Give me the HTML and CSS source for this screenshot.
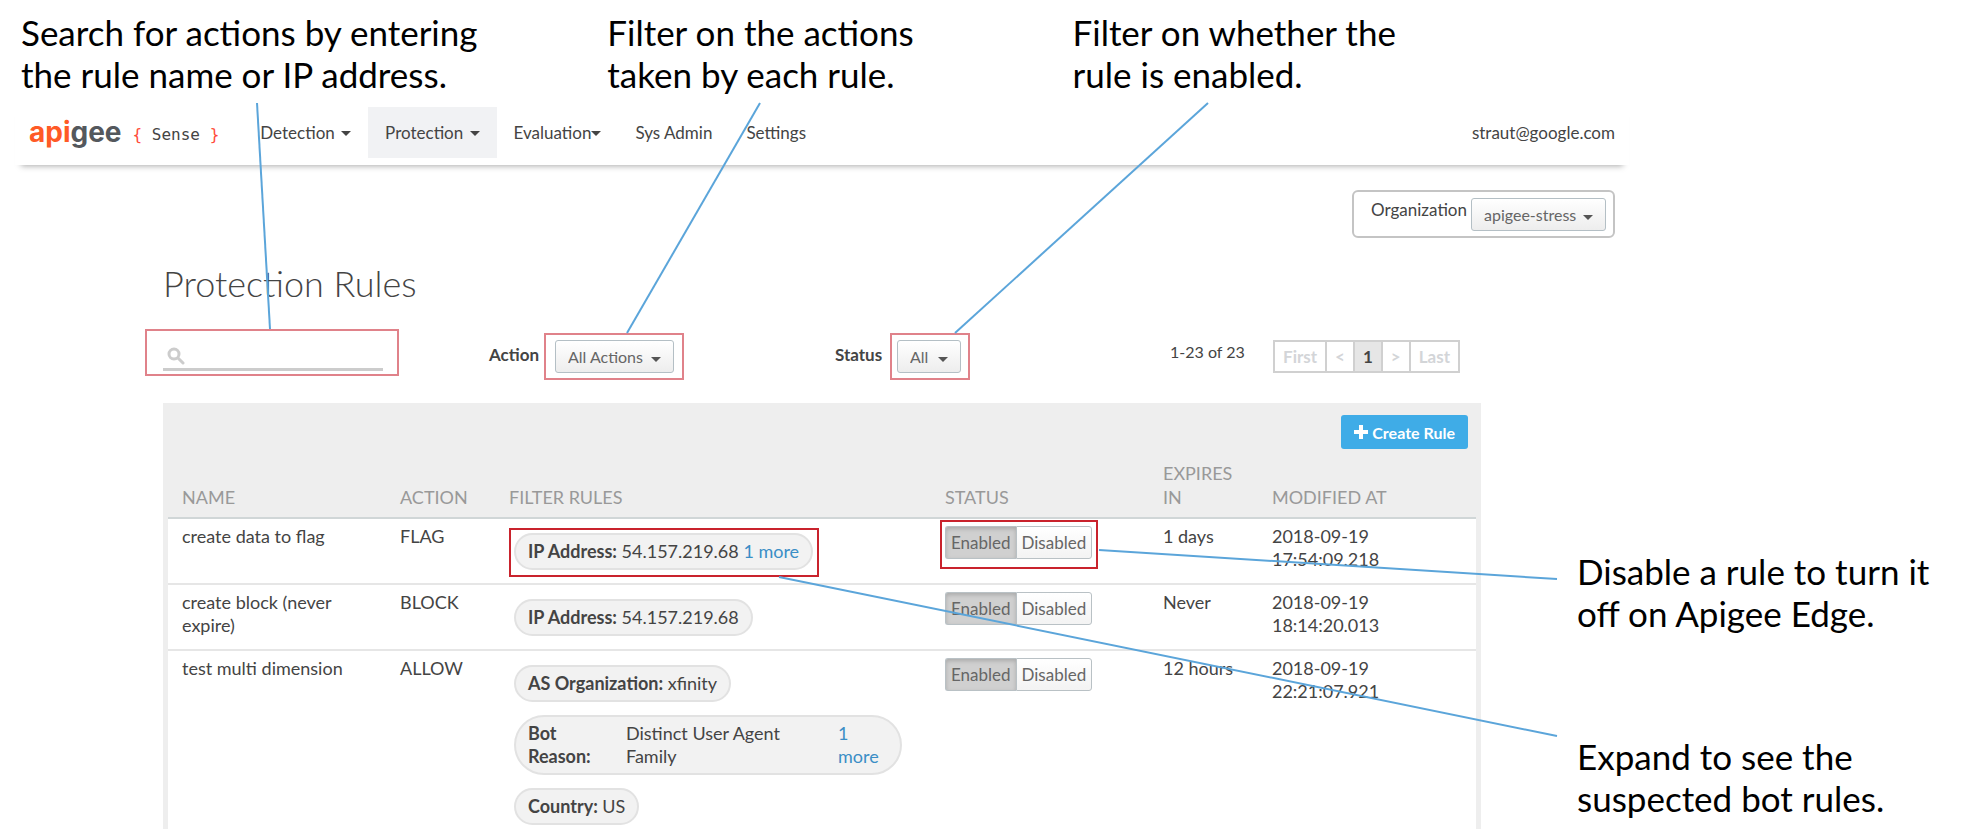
FILE: index.html
```html
<!DOCTYPE html>
<html lang="en">
<head>
  <meta charset="UTF-8" />
  <meta name="viewport" content="width=device-width, initial-scale=1.0"/>
  <title>Protection Rules</title>
  <link rel="stylesheet" href="styles.css">
</head>
<body>
  <div class="page">
    <div class="top-notes">
      <p class="note">Search for actions by entering<br>the rule name or IP address.</p>
      <p class="note">Filter on the actions<br>taken by each rule.</p>
      <p class="note">Filter on whether the<br>rule is enabled.</p>
    </div>

    <header class="header">
      <a class="logo" href="#"><span class="logo-api">api</span>gee</a>
      <span class="product"><b>{</b> Sense <b>}</b></span>
      <nav class="nav">
        <a href="#">Detection <i class="caret"></i></a>
        <a href="#" class="active">Protection <i class="caret"></i></a>
        <a href="#" class="tight">Evaluation<i class="caret"></i></a>
        <a href="#">Sys Admin</a>
        <a href="#">Settings</a>
      </nav>
      <a class="user" href="#">straut@google.com</a>
    </header>

    <div class="org-row">
      <div class="org">
        <label for="org">Organization</label>
        <select id="org" class="select org-select">
          <option>apigee-stress</option>
        </select>
      </div>
    </div>

    <div class="content">
      <main class="main">
        <h1>Protection Rules</h1>

        <div class="toolbar">
          <div class="search mark-light">
            <div class="search-field">
              <svg width="18" height="18" viewBox="0 0 18 18" aria-hidden="true">
                <circle cx="7" cy="7" r="5" fill="none" stroke="#ccc" stroke-width="3"/>
                <path d="M11 11l5 5" stroke="#ccc" stroke-width="3" stroke-linecap="round"/>
              </svg>
              <input type="text" aria-label="Search rules">
            </div>
          </div>
          <div class="filter">
            <label for="action">Action</label>
            <div class="mark-light mark-action">
              <select id="action" class="select action-select">
                <option>All Actions</option>
              </select>
            </div>
          </div>
          <div class="filter">
            <label for="status">Status</label>
            <div class="mark-light mark-status">
              <select id="status" class="select status-select">
                <option>All</option>
              </select>
            </div>
          </div>
          <div class="paging">
            <span class="count">1-23 of 23</span>
            <div class="pager">
              <button>First</button>
              <button>&lt;</button>
              <button class="current">1</button>
              <button>&gt;</button>
              <button>Last</button>
            </div>
          </div>
        </div>

        <section class="panel">
          <div class="panel-bar">
            <button class="create">
              <svg width="14" height="14" viewBox="0 0 14 14" aria-hidden="true">
                <path d="M7 0v14M0 7h14" stroke="#fff" stroke-width="4"/>
              </svg>
              Create Rule
            </button>
          </div>
          <table class="rules">
            <colgroup>
              <col class="col-2"><col class="col-1"><col class="col-4">
              <col class="col-2"><col class="col-1"><col class="col-2">
            </colgroup>
            <thead>
              <tr>
                <th>NAME</th>
                <th>ACTION</th>
                <th>FILTER RULES</th>
                <th>STATUS</th>
                <th>EXPIRES<br>IN</th>
                <th>MODIFIED AT</th>
              </tr>
            </thead>
            <tbody>
              <tr>
                <td>create data to flag</td>
                <td>FLAG</td>
                <td class="pills">
                  <div class="mark-pill">
                    <div class="pill"><b>IP Address:</b> 54.157.219.68 <a href="#">1 more</a></div>
                  </div>
                </td>
                <td>
                  <div class="mark-toggle">
                    <div class="toggle"><button class="on">Enabled</button><button>Disabled</button></div>
                  </div>
                </td>
                <td>1 days</td>
                <td>2018-09-19<br>17:54:09.218</td>
              </tr>
              <tr>
                <td>create block (never expire)</td>
                <td>BLOCK</td>
                <td class="pills">
                  <div class="pill"><b>IP Address:</b> 54.157.219.68</div>
                </td>
                <td>
                  <div class="toggle"><button class="on">Enabled</button><button>Disabled</button></div>
                </td>
                <td>Never</td>
                <td>2018-09-19<br>18:14:20.013</td>
              </tr>
              <tr>
                <td>test multi dimension</td>
                <td>ALLOW</td>
                <td class="pills">
                  <div class="pill"><b>AS Organization:</b> xfinity</div>
                  <div class="pill pill-wide">
                    <b>Bot<br>Reason:</b>
                    <span>Distinct User Agent Family</span>
                    <a href="#">1<br>more</a>
                  </div>
                  <div class="pill"><b>Country:</b> US</div>
                </td>
                <td>
                  <div class="toggle"><button class="on">Enabled</button><button>Disabled</button></div>
                </td>
                <td class="nowrap">12 hours</td>
                <td>2018-09-19<br>22:21:07.921</td>
              </tr>
            </tbody>
          </table>
        </section>
      </main>

      <aside class="side-notes">
        <p class="note">Disable a rule to turn it<br>off on Apigee Edge.</p>
        <p class="note">Expand to see the<br>suspected bot rules.</p>
      </aside>
    </div>

    <!-- leader lines from the notes to the controls -->
    <svg class="leaders" viewBox="0 0 1979 829" preserveAspectRatio="none" aria-hidden="true">
      <path d="M257 103L270 329"/>
      <path d="M760 103L627 333"/>
      <path d="M1208 103L955 333"/>
      <path d="M1099 550L1557 579"/>
      <path d="M779 577L1557 736"/>
    </svg>
  </div>
</body>
</html>
```

FILE: styles.css
```css
* {
  box-sizing: border-box;
}
body {
  margin: 0;
  font-family: Lato, sans-serif;
  font-size: 17px;
  color: #444;
  background: #fff;
}
a {
  color: inherit;
  text-decoration: none;
}
button, select, input {
  font-family: inherit;
  font-size: 16px;
  margin: 0;
}
.page {
  position: relative;
  height: 100vh;
  overflow: hidden;
}

/* notes */
.note {
  margin: 0;
  font-size: 35px;
  line-height: 42px;
  color: #000;
  white-space: nowrap;
}
.top-notes {
  display: grid;
  grid-template-columns: 586fr 465fr 906fr;
  padding: 11px 0 10px 21px;
}
.side-notes {
  flex: 0 0 402px;
  padding-top: 312px;
}
.side-notes .note + .note {
  margin-top: 101px;
}
.leaders {
  position: absolute;
  top: 0;
  left: 0;
  width: 100%;
  height: 829px;
  pointer-events: none;
}
.leaders path {
  fill: none;
  stroke: #5ba5da;
  stroke-width: 2;
  vector-effect: non-scaling-stroke;
}

/* header */
.header {
  display: flex;
  align-items: center;
  height: 60px;
  margin: 0 350px 0 15px;
  padding: 0 14px 6px;
  box-shadow: 0 7px 6px -6px #aaa;
}
.logo {
  font-family: Inter, sans-serif;
  font-size: 28px;
  font-weight: 700;
  color: #54585d;
}
.logo-api {
  color: #ff5a26;
}
.product {
  margin-left: 11px;
  padding-top: 4px;
  font-family: "DejaVu Sans Mono", monospace;
  font-size: 16px;
}
.product b {
  font-weight: 400;
  color: #ff4b3a;
}
.nav {
  display: flex;
  margin-left: 24px;
}
.nav a {
  padding: 0 17px;
  line-height: 51px;
}
.nav .active {
  background: #f1f2f4;
}
.caret {
  display: inline-block;
  margin-left: 2px;
  vertical-align: 3px;
  border: 5px solid transparent;
  border-top-color: #444;
  border-bottom: 0;
}
.tight .caret {
  margin-left: 0;
}
.user {
  margin-left: auto;
}

/* organization picker */
.org-row {
  display: flex;
  justify-content: flex-end;
  margin: 25px 364px 0 0;
}
.org {
  display: flex;
  align-items: center;
  gap: 4px;
  height: 48px;
  padding: 0 7px 0 17px;
  border: 2px solid #c4c4c4;
  border-radius: 6px;
}
.org label {
  padding-bottom: 9px;
}
.select {
  appearance: none;
  height: 33px;
  padding: 0 12px;
  border: 1px solid #b4bfc5;
  border-radius: 3px;
  color: #666;
  background: url("data:image/svg+xml,%3Csvg xmlns='http://www.w3.org/2000/svg' width='10' height='5'%3E%3Cpath d='M0 0h10L5 5z' fill='%23555'/%3E%3C/svg%3E") no-repeat right 12px top 16px, linear-gradient(#fff, #ededed);
}
.org-select {
  width: 135px;
}
.action-select {
  width: 119px;
}
.status-select {
  width: 64px;
}

/* toolbar */
.content {
  display: flex;
  align-items: flex-start;
}
.main {
  flex: 1;
  min-width: 0;
  margin: 0 96px 0 145px;
}
h1 {
  margin: 23px 0 24px 18px;
  font-size: 36px;
  line-height: 44px;
  font-weight: 300;
}
.toolbar {
  display: grid;
  grid-template-columns: 344fr 346fr 335fr 311fr;
  height: 51px;
}
.mark-light {
  border: 2px solid #e0828a;
}
.search {
  width: 254px;
  height: 47px;
  padding: 12px 14px 0 16px;
}
.search-field {
  display: flex;
  align-items: center;
  height: 28px;
  padding-left: 4px;
  border-bottom: 3px solid #ccc;
}
.search-field input {
  flex: 1;
  min-width: 0;
  padding: 0 4px;
  border: 0;
  outline: 0;
  background: transparent;
}
.filter {
  display: flex;
  align-items: flex-start;
  padding-top: 4px;
}
.filter label {
  width: 55px;
  line-height: 44px;
  font-weight: 700;
}
.filter .mark-light {
  height: 47px;
  padding: 5px 8px 0 9px;
}
.filter .mark-status {
  padding: 5px 7px 0 5px;
}
.paging {
  display: flex;
  align-items: center;
  justify-content: space-between;
  padding-right: 21px;
  font-size: 16px;
}
.count {
  padding-bottom: 6px;
}
.pager {
  display: flex;
  margin-top: 4px;
}
.pager button {
  height: 33px;
  padding: 0 8px;
  border: 2px solid #d0d0d0;
  font-weight: 700;
  font-size: 17px;
  color: #d3d5d8;
  background: #fff;
}
.pager button + button {
  margin-left: -2px;
}
.pager .current {
  color: #444;
  background: #e6e6e6;
}

/* rules table */
.panel {
  margin: 23px 0 0 18px;
  padding: 0 5px;
  background: #eee;
}
.panel-bar {
  display: flex;
  justify-content: flex-end;
  padding: 12px 8px 0;
}
.create {
  display: flex;
  align-items: center;
  gap: 4px;
  height: 34px;
  padding: 0 13px;
  border: 0;
  border-radius: 3px;
  font-weight: 700;
  color: #fff;
  background: #3face7;
}
.rules {
  width: 100%;
  table-layout: fixed;
  border-collapse: separate;
  border-spacing: 0;
  font-size: 18px;
  line-height: 23px;
}
.col-1 {
  width: 8.333%;
}
.col-2 {
  width: 16.667%;
}
.col-4 {
  width: 33.333%;
}
.rules th {
  padding: 12px 0 8px 14px;
  border-bottom: 2px solid #d0d6d7;
  text-align: left;
  vertical-align: bottom;
  line-height: 24px;
  font-weight: 400;
  color: #999;
}
.rules td {
  padding: 6px 14px 12px;
  border-bottom: 2px solid #e6e6e6;
  vertical-align: top;
  background: #fff;
}
.rules tr:last-child td {
  padding-bottom: 24px;
}
.rules a {
  color: #3b8ec6;
}
.rules .nowrap {
  white-space: nowrap;
}
.rules .pills {
  padding-top: 9px;
  padding-bottom: 6px;
}
.pill {
  width: fit-content;
  margin: 5px 0 13px 5px;
  padding: 5px 12px;
  border: 2px solid #e2e2e2;
  border-radius: 20px;
  background: #f2f2f2;
}
.pill + .pill {
  margin-top: 0;
}
.pill:last-child {
  margin-bottom: 0;
}
.pill-wide {
  display: grid;
  grid-template-columns: 88px 1fr 50px;
  column-gap: 10px;
  width: 388px;
  border-radius: 30px;
}
.pill-wide span {
  padding-right: 30px;
}
.mark-pill {
  width: fit-content;
  border: 2px solid #c9232d;
  padding: 3px 4px 5px 3px;
}
.mark-pill .pill {
  margin: 0;
}
.mark-toggle {
  width: fit-content;
  margin: -5px 0 -4px -5px;
  padding: 4px 4px 8px 3px;
  border: 2px solid #c9232d;
}
.toggle {
  display: flex;
}
td > .toggle {
  margin-top: 1px;
}
.toggle button {
  height: 33px;
  padding: 0 5px;
  border: 1px solid #b9c1c5;
  border-radius: 0 3px 3px 0;
  font-size: 17px;
  color: #666;
  background: linear-gradient(#fff, #f3f3f3);
}
.toggle .on {
  border-right: 0;
  border-radius: 3px 0 0 3px;
  background: #d0d0d0;
  box-shadow: inset 0 2px 4px #aaa;
}
```
